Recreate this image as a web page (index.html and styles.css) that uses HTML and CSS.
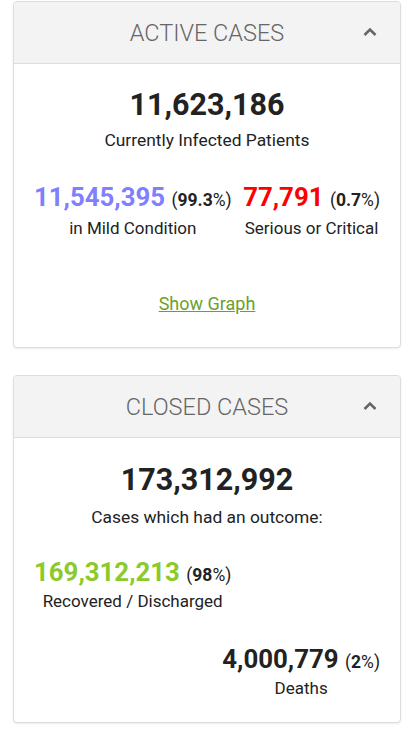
FILE: index.html
```html
<!DOCTYPE html>
<html>
<head>
<meta charset="utf-8">
<link rel="stylesheet" href="styles.css">
</head>
<body>
<div class="card">
  <div class="card-head">
    <span class="title">ACTIVE CASES</span>
    <svg class="chev" width="16" height="10" viewBox="0 0 16 10"><polyline points="2.5,8 8,2.5 13.5,8" fill="none" stroke="#666" stroke-width="2.6"/></svg>
  </div>
  <div class="card-body active">
    <div class="big">11,623,186</div>
    <div class="sub">Currently Infected Patients</div>
    <div class="split">
      <div class="stat">
        <div class="line"><span class="num mild">11,545,395</span> <span class="pct">(<b>99.3</b>%)</span></div>
        <div class="lbl">in Mild Condition</div>
      </div>
      <div class="stat">
        <div class="line"><span class="num crit">77,791</span> <span class="pct">(<b>0.7</b>%)</span></div>
        <div class="lbl">Serious or Critical</div>
      </div>
    </div>
    <div class="graph"><a href="#">Show Graph</a></div>
  </div>
</div>
<div class="card">
  <div class="card-head">
    <span class="title">CLOSED CASES</span>
    <svg class="chev" width="16" height="10" viewBox="0 0 16 10"><polyline points="2.5,8 8,2.5 13.5,8" fill="none" stroke="#666" stroke-width="2.6"/></svg>
  </div>
  <div class="card-body closed">
    <div class="big">173,312,992</div>
    <div class="sub">Cases which had an outcome:</div>
    <div class="split">
      <div class="stat">
        <div class="line"><span class="num rec">169,312,213</span> <span class="pct">(<b>98</b>%)</span></div>
        <div class="lbl">Recovered / Discharged</div>
      </div>
    </div>
    <div class="split end">
      <div class="stat">
        <div class="line"><span class="num dead">4,000,779</span> <span class="pct">(<b>2</b>%)</span></div>
        <div class="lbl">Deaths</div>
      </div>
    </div>
  </div>
</div>
</body>
</html>
```
FILE: styles.css
```css
html, body {
  margin: 0;
  padding: 0;
  background: #fff;
}
body {
  padding-top: 1px;
  font-family: Roboto, "Liberation Sans", sans-serif;
  color: #222;
}
.card {
  margin: 0 14px 27px 13px;
  border: 1px solid #ddd;
  border-radius: 4px;
  background: #fff;
  box-shadow: 0 1px 2px rgba(0,0,0,0.08);
  overflow: hidden;
}
.card-head {
  position: relative;
  height: 61px;
  background: #f3f3f3;
  border-bottom: 1px solid #ddd;
  display: flex;
  align-items: center;
  justify-content: center;
}
.title {
  font-weight: 300;
  font-size: 23.5px;
  color: #666;
}
.chev {
  position: absolute;
  right: 22px;
  top: 25px;
}
.card-body {
  padding: 23px 20px 31px;
  text-align: center;
}
.closed { padding: 24px 20px 22px; }
.big {
  font-size: 30.5px;
  font-weight: 700;
  line-height: 36px;
  color: #222;
}
.sub {
  font-size: 17.4px;
  line-height: 24px;
  margin-top: 5px;
  color: #222;
}
.closed .sub { margin-top: 7px; }
.split {
  display: flex;
  justify-content: space-between;
  margin-top: 29px;
}
.closed .split { margin-top: 27px; }
.closed .split.end { justify-content: flex-end; margin-top: 30px; }
.stat { text-align: center; }
.line {
  font-size: 25.8px;
  line-height: 32px;
  height: 32px;
  white-space: nowrap;
}
.num {
  font-weight: 700;
}
.mild { color: #8080ff; }
.crit { color: #ff0000; }
.rec { color: #8aca2b; }
.dead { color: #222; }
.pct {
  font-size: 17.5px;
  line-height: 1;
  color: #222;
}
.pct b { font-weight: 700; }
.lbl {
  font-size: 17px;
  line-height: 24px;
  margin-top: 3px;
  color: #222;
}
.closed .lbl { margin-top: 1px; }
.graph {
  margin-top: 52px;
  font-size: 18px;
  line-height: 24px;
}
.graph a {
  color: #6ba12a;
  text-decoration: underline;
}
```
